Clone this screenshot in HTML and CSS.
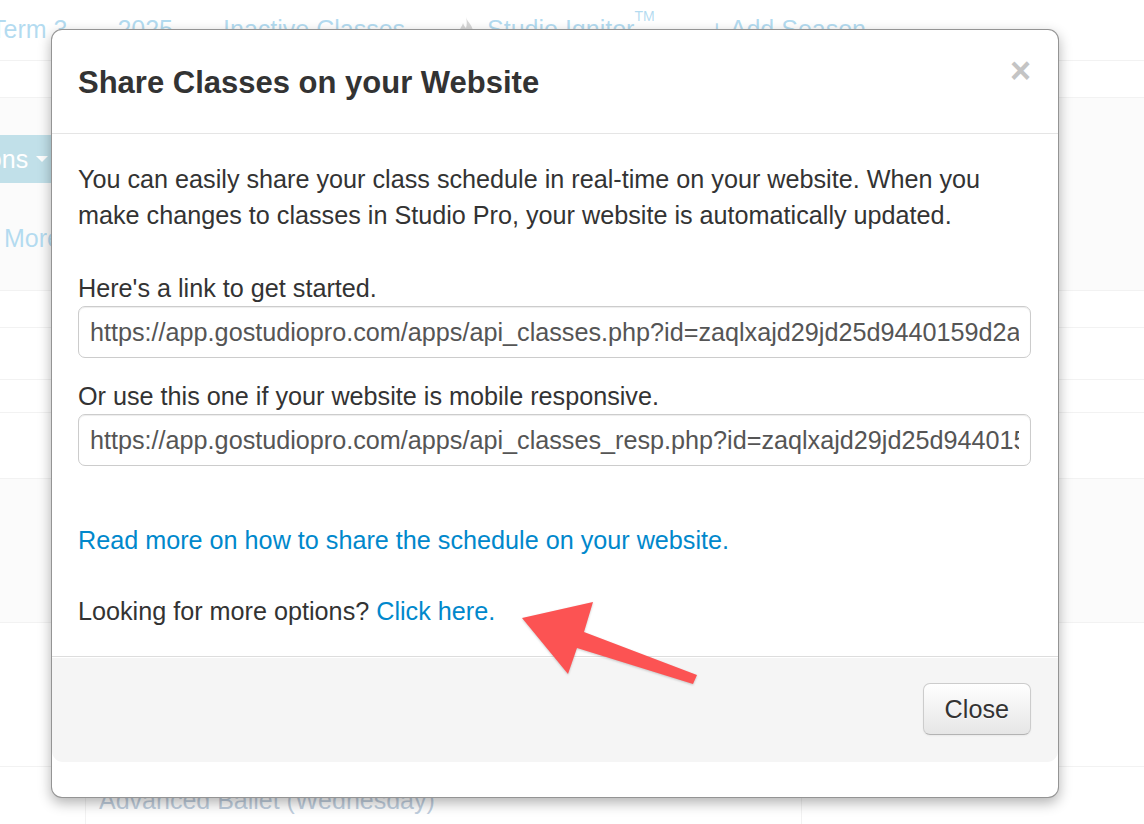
FILE: index.html
```html
<!DOCTYPE html>
<html lang="en">
<head>
<meta charset="utf-8">
<title>Share Classes on your Website</title>
<link rel="stylesheet" href="styles.css">
</head>
<body>
<div class="page">
  <div class="bg">
    <nav class="topnav">
      <a class="tab">Term 3</a>
      <a class="tab">2025</a>
      <a class="tab">Inactive Classes</a>
      <a class="tab ignitor"><svg class="flame" viewBox="0 0 18 24" width="18" height="24"><path d="M9 0C10 5 16 8 16 15C16 20 13 24 9 24C5 24 2 21 2 16C2 12 5 10 6 6C7 9 8 10 9 11C10 8 10 4 9 0Z"/></svg>Studio Ignitor<sup>TM</sup></a>
      <a class="tab add">+ Add Season</a>
    </nav>
    <div class="subbar"></div>
    <div class="toolbar">
      <div class="btn-row"><span class="opt-btn">Options <span class="caret"></span></span></div>
      <a class="more">More</a>
    </div>
    <div class="row h36"></div>
    <div class="row h51"></div>
    <div class="row h32"></div>
    <div class="row h65"></div>
    <div class="row h143 shade"></div>
    <div class="row h143"></div>
    <div class="row last">
      <div class="cell-left"></div>
      <div class="cell-main"><a class="class-link">Advanced Ballet (Wednesday)</a></div>
      <div class="cell-right"></div>
    </div>
  </div>

  <div class="backdrop"></div>

  <div class="modal">
    <div class="modal-header">
      <h3 class="modal-title">Share Classes on your Website</h3>
      <button class="close" type="button">×</button>
    </div>
    <div class="modal-body">
      <p class="intro">You can easily share your class schedule in real-time on your website. When you make changes to classes in Studio Pro, your website is automatically updated.</p>
      <label class="field-label">Here's a link to get started.</label>
      <input class="url url-first" type="text" readonly value="https://app.gostudiopro.com/apps/api_classes.php?id=zaqlxajd29jd25d9440159d2a1b7c3">
      <label class="field-label">Or use this one if your website is mobile responsive.</label>
      <input class="url url-second" type="text" readonly value="https://app.gostudiopro.com/apps/api_classes_resp.php?id=zaqlxajd29jd25d9440159d2a1b7c3">
      <p class="readmore"><a class="link">Read more on how to share the schedule on your website.</a></p>
      <p class="more-opts">Looking for more options? <a class="link">Click here.</a></p>
    </div>
    <div class="modal-footer">
      <button class="btn" type="button">Close</button>
    </div>
  </div>

  <svg class="arrow" viewBox="0 0 190 95" width="190" height="95">
    <polygon points="7,23 78,7 69,37 182,80 178,89 62,53 53,79"/>
  </svg>
</div>
</body>
</html>
```

FILE: styles.css
```css
* { box-sizing: border-box; }

html, body {
  margin: 0;
  padding: 0;
  background: #fff;
}

body {
  font-family: "Liberation Sans", Arial, Helvetica, sans-serif;
  font-size: 25.2px;
  line-height: 36px;
  color: #333;
}

.page {
  position: relative;
  width: 1144px;
  height: 824px;
  overflow: hidden;
}

/* ---------- background page ---------- */
.bg {
  width: 100%;
}

.topnav {
  display: flex;
  align-items: center;
  gap: 50px;
  height: 61px;
  padding-bottom: 3px;
  margin-left: -9px;
  border-bottom: 1px solid #d4d4d4;
  font-size: 25px;
  white-space: nowrap;
}

.tab {
  color: #0088cc;
  text-decoration: none;
  line-height: 30px;
}

.tab.add {
  margin-left: 5px;
}

.ignitor {
  display: flex;
  align-items: center;
}

.flame {
  fill: #777;
  margin-left: 2px;
  margin-right: 12px;
}

.ignitor sup {
  font-size: 14px;
  line-height: 0;
  align-self: flex-start;
  margin-top: 2px;
}

.subbar {
  height: 37px;
  border-bottom: 1px solid #d4d4d4;
}

.toolbar {
  height: 193px;
  padding-top: 37px;
  background: #f0f0f0;
  border-bottom: 1px solid #d4d4d4;
}

.btn-row {
  display: flex;
  margin-left: -78px;
}

.opt-btn {
  display: flex;
  align-items: center;
  gap: 8px;
  height: 48px;
  padding: 0 30px 0 20px;
  background: #2f96b4;
  color: #fff;
  font-size: 25px;
  border-radius: 6px;
}

.caret {
  width: 0;
  height: 0;
  border-left: 6px solid transparent;
  border-right: 6px solid transparent;
  border-top: 6px solid #fff;
}

.more {
  display: block;
  margin-top: 40px;
  padding-left: 4px;
  color: #0088cc;
  font-size: 25px;
  line-height: 30px;
}

.row {
  border-bottom: 1px solid #d4d4d4;
}
.h36 { height: 37px; }
.h51 { height: 52px; }
.h32 { height: 33px; }
.h65 { height: 66px; }
.h143 { height: 144px; }
.shade { background: #f2f2f2; }

.row.last {
  display: grid;
  grid-template-columns: 86px 716px 1fr;
  height: 60px;
  border-bottom: none;
}

.cell-left, .cell-main {
  border-right: 1px solid #d4d4d4;
}

.cell-main {
  padding: 15px 0 0 13px;
}

.class-link {
  color: #2a5d8f;
  font-size: 25px;
  line-height: 30px;
}

.backdrop {
  position: absolute;
  inset: 0;
  background: rgba(255, 255, 255, 0.7);
}

/* ---------- modal ---------- */
.modal {
  position: absolute;
  left: 51px;
  top: 29px;
  width: 1008px;
  padding-bottom: 35px;
  background: #fff;
  border: 1px solid rgba(0, 0, 0, 0.42);
  border-radius: 11px;
  box-shadow: 0 5px 13px rgba(0, 0, 0, 0.3);
}

.modal-header {
  display: flex;
  align-items: center;
  height: 104px;
  padding: 0 27px 0 26px;
  border-bottom: 1px solid #e5e5e5;
}

.modal-title {
  flex: 1;
  margin: 0;
  padding-top: 2px;
  font-size: 31px;
  font-weight: bold;
  line-height: 36px;
  color: #333;
}

.close {
  align-self: flex-start;
  margin-top: 23px;
  padding: 0;
  border: 0;
  background: none;
  font-family: inherit;
  font-size: 36px;
  font-weight: bold;
  line-height: 36px;
  color: #c4c4c4;
  text-shadow: 0 1px 0 #fff;
}

.modal-body {
  padding: 27px 27px 27px 26px;
}

.intro {
  margin: 0 0 37px;
}

.field-label {
  display: block;
  margin: 0;
  font-weight: normal;
}

.url {
  display: block;
  width: 100%;
  height: 52px;
  margin: 0;
  padding: 0 11px;
  font-family: inherit;
  font-size: 25.2px;
  color: #555;
  background: #fff;
  border: 1px solid #ccc;
  border-radius: 7px;
  box-shadow: inset 0 1px 1px rgba(0, 0, 0, 0.075);
  outline: none;
}

.url-first { margin-bottom: 20px; }
.url-second { margin-bottom: 56px; }

.readmore {
  margin: 0 0 35px;
}

.more-opts {
  margin: 0;
}

.link {
  color: #0088cc;
  text-decoration: none;
}

.modal-footer {
  display: flex;
  justify-content: flex-end;
  padding: 26px 27px 27px;
  background: #f5f5f5;
  border-top: 1px solid #ddd;
  border-radius: 0 0 11px 11px;
  box-shadow: inset 0 1px 0 #fff;
}

.btn {
  height: 52px;
  padding: 0 21px;
  font-family: inherit;
  font-size: 25.2px;
  color: #333;
  background: linear-gradient(to bottom, #ffffff, #e6e6e6);
  border: 1px solid #ccc;
  border-bottom-color: #b3b3b3;
  border-radius: 7px;
  box-shadow: inset 0 1px 0 rgba(255, 255, 255, 0.2), 0 1px 2px rgba(0, 0, 0, 0.05);
  text-shadow: 0 1px 1px rgba(255, 255, 255, 0.75);
}

/* ---------- annotation arrow ---------- */
.arrow {
  position: absolute;
  left: 515px;
  top: 595px;
  fill: #fc5353;
  filter: drop-shadow(0 1px 1px rgba(0, 0, 0, 0.2));
}
```
